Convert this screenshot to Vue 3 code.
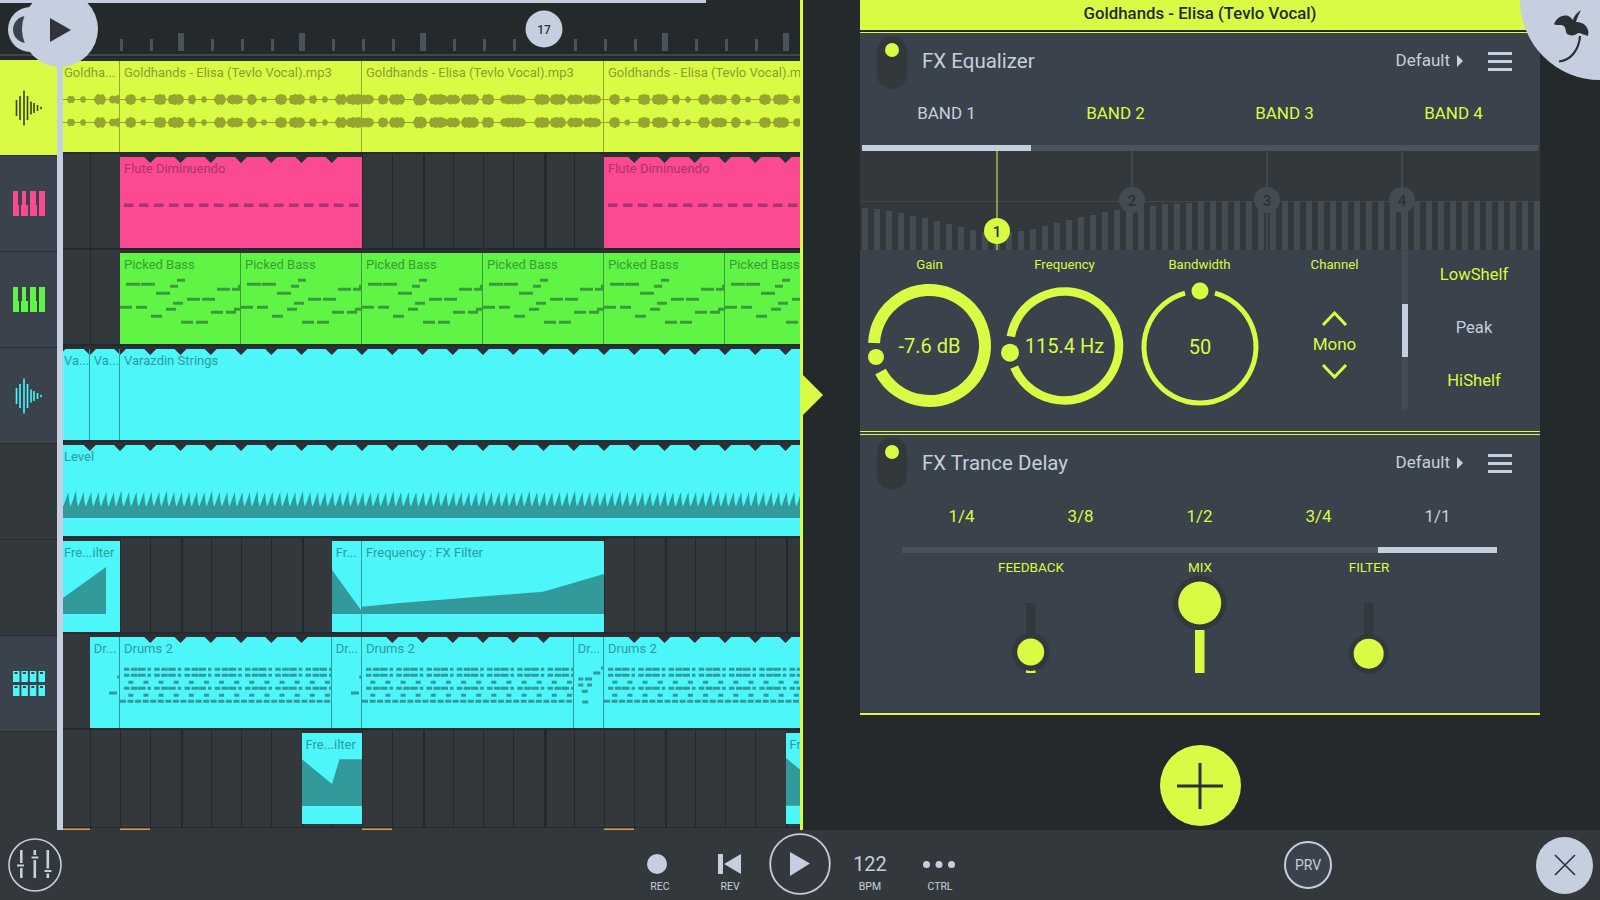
<script setup>
/**
 * Playlist view with channel FX panel
 */

const BEAT = 30.25
const ORIGIN = 59.5
const LANE_LEFT = 63
const LANE_RIGHT = 800
const CLIP_H = 91

const beatX = (k) => ORIGIN + BEAT * k
const rect = (x, y, w, h = 3) => `M${x} ${y - h / 2}h${w}v${h}h${-w}Z`
const poly = (pts) => 'M' + pts.map((p) => p.join(' ')).join('L') + 'Z'

// waveform outline from a list of [center, width, height] blobs
function wave(blobs, width, cy) {
  const amp = (x) => {
    let a = 0.5
    for (const [c, w, h] of blobs) {
      const d = (x - c) / (w / 2)
      if (Math.abs(d) < 1) {
        const v = (h / 2) * 1.12 * Math.sqrt(1 - d * d * d * d) * (0.92 + 0.08 * Math.sin(x * 1.3))
        a = Math.max(a, v)
      }
    }
    return a
  }
  const top = []
  const bottom = []
  for (let x = 0; x <= width; x++) {
    const a = amp(x)
    top.push([x, (cy - a).toFixed(1)])
    bottom.unshift([x, (cy + a).toFixed(1)])
  }
  return poly(top.concat(bottom))
}

const audioA = [[10.7, 10, 10], [23.3, 5, 6], [40, 12, 10], [56, 16, 10], [72, 7, 9], [84, 5, 6], [100, 11, 10], [115, 16, 9], [131.7, 9, 10], [144, 5, 6], [161, 11, 10], [177, 16, 10], [193, 7, 8], [205, 5, 6], [221, 11, 10], [238, 24, 10]]
const audioB = [[5, 13, 9], [21, 10, 9], [35, 16, 10], [58, 13, 11], [76, 18, 10], [91, 14, 9], [108, 18, 10], [126, 12, 10], [151, 26, 9], [180, 15, 10], [196, 16, 10], [213, 16, 9], [230, 18, 9]]
const audioHead = [[8, 7, 7], [20, 6, 6], [37, 11, 10], [50, 8, 7], [55, 6, 8]]
const stereo = (blobs, w) => wave(blobs, w, 38.5) + wave(blobs, w, 61.5)

const fluteArt = (w) => {
  let d = ''
  for (let x = 4; x < w; x += 15) d += rect(x, 48.3, 9.5, 3.6)
  return d
}

const bassNotes = [[6, 14, 31.3], [20.7, 14.3, 31.3], [36, 14, 40.3], [50, 8, 33.3], [57, 8, 27.3], [0, 12, 54.3], [16, 11, 54.3], [31, 11, 63.3], [46, 10, 56.3], [53, 10, 50.3], [67, 13, 46.3], [82, 13, 46.3], [61, 12, 69.3], [76, 12, 69.3], [91, 12, 59.3], [106, 10, 59.3], [114, 7, 56.3], [97, 13, 36.3], [112, 8, 36.3], [118, 3, 33.3]]
const bassArt = () => bassNotes.map(([x, w, y]) => rect(x, y, w)).join('')

const drumsArt = (w) => {
  let d = ''
  for (let b = 0; b * BEAT < w; b++) {
    for (const y of [32.3, 38.3, 51.3]) {
      for (const [x, len] of [[0, 5.5], [7, 6.5], [14, 7.5], [23.5, 3.5]]) {
        d += rect(4 + BEAT * b + x, y, len)
      }
    }
  }
  for (let i = 0; i * 15.125 < w; i++) {
    d += rect(8.3 + i * 15.125, 45.3, 5) + rect(8.3 + i * 15.125, 58.3, 5)
  }
  for (let i = 0; i * 7.56 < w; i++) d += rect(i * 7.56, 64.3, 6)
  return d
}
const drumsShortA = () => rect(19, 56, 8) + rect(27.3, 40, 3)
const drumsShortB = () =>
  rect(4.3, 42, 5) + rect(11, 42, 7) + rect(4.3, 48, 5) + rect(13, 48, 5) +
  rect(7.7, 54.3, 6) + rect(8.3, 65, 6) + rect(19.3, 36, 7) + rect(27, 31, 3)

const levelArt = () => {
  let d = rect(0, 67, 737, 12)
  let i = 0
  for (let x = 0; x < 737; x += 7.56) {
    const top = i % 6 === 1 ? 45.5 : 47
    d += `M${x.toFixed(1)} 62L${(x + 5.5).toFixed(1)} ${top}L${(x + 6.2).toFixed(1)} 56L${(x + 7.56).toFixed(1)} 62Z`
    i++
  }
  return d
}

const mkClip = (from, to, label, art) => ({ from, to, label, art })

const rawTracks = [
  {
    color: '#d9fb44', ink: '#96a530', text: '#8c9c32', side: 'lime', icon: 'wave', iconColor: '#3a4420',
    clips: [
      mkClip(0, 2, 'Goldha...', (w) => stereo(audioHead, w)),
      mkClip(2, 10, 'Goldhands - Elisa (Tevlo Vocal).mp3', (w) => stereo(audioA, w)),
      mkClip(10, 18, 'Goldhands - Elisa (Tevlo Vocal).mp3', (w) => stereo(audioB, w)),
      mkClip(18, 25, 'Goldhands - Elisa (Tevlo Vocal).mp3', (w) => stereo(audioA, w)),
    ],
  },
  {
    color: '#fb4a91', ink: '#ac3274', text: '#ac3274', side: 'panel', icon: 'piano', iconColor: '#fb4a91', notches: true,
    clips: [mkClip(2, 10, 'Flute Diminuendo', fluteArt), mkClip(18, 25, 'Flute Diminuendo', fluteArt)],
  },
  {
    color: '#60f545', ink: '#3c9a3e', text: '#379c3b', side: 'panel', icon: 'piano', iconColor: '#60f545',
    clips: [2, 6, 10, 14, 18, 22].map((k) => mkClip(k, k === 22 ? 25 : k + 4, 'Picked Bass', bassArt)),
  },
  {
    color: '#4df6f9', ink: '#339a9c', text: '#2c9ca2', side: 'panel', icon: 'wave', iconColor: '#4df6f9', notches: true, edgeNotches: true,
    clips: [mkClip(0, 1, 'Va...'), mkClip(1, 2, 'Va...'), mkClip(2, 25, 'Varazdin Strings')],
  },
  {
    color: '#4df6f9', ink: '#339a9c', text: '#2c9ca2', side: 'dark', notches: true,
    clips: [mkClip(0, 25, 'Level', levelArt)],
  },
  {
    color: '#4df6f9', ink: '#339a9c', text: '#2c9ca2', side: 'dark',
    clips: [
      mkClip(0, 2, 'Fre...ilter', () => poly([[0, 57], [43, 26], [43, 73], [0, 73]])),
      mkClip(9, 10, 'Fr...', () => poly([[0, 29], [29.5, 69.7], [30.25, 73], [0, 73]])),
      mkClip(10, 18, 'Frequency : FX Filter', () => poly([[0, 65.7], [38, 62], [181, 50.7], [242, 33], [242, 73], [0, 73]])),
    ],
  },
  {
    color: '#4df6f9', ink: '#339a9c', text: '#2c9ca2', side: 'panel', icon: 'pads', iconColor: '#4df6f9', notches: true,
    clips: [
      mkClip(1, 2, 'Dr...', drumsShortA),
      mkClip(2, 9, 'Drums 2', drumsArt),
      mkClip(9, 10, 'Dr...', drumsShortA),
      mkClip(10, 17, 'Drums 2', drumsArt),
      mkClip(17, 18, 'Dr...', drumsShortB),
      mkClip(18, 25, 'Drums 2', drumsArt),
    ],
  },
  {
    color: '#4df6f9', ink: '#339a9c', text: '#2c9ca2', side: 'dark',
    clips: [
      mkClip(8, 10, 'Fre...ilter', () => poly([[0, 26.3], [30, 51], [37.5, 26.3], [60.5, 26.3], [60.5, 73], [0, 73]])),
      mkClip(24, 25, 'Fre...ilter', () => poly([[0, 25], [14.5, 37], [14.5, 72.7], [0, 72.7]])),
    ],
  },
]

const tracks = rawTracks.map((track) => ({
  ...track,
  clips: track.clips.map((c, i) => {
    const x0 = Math.max(beatX(c.from), LANE_LEFT)
    const x1 = Math.min(beatX(c.to), LANE_RIGHT)
    const w = x1 - x0
    const joined = i > 0 && track.clips[i - 1].to === c.from
    let notch = ''
    if (track.notches) {
      const a = track.edgeNotches ? c.from : c.from + 1
      const b = track.edgeNotches ? c.to : c.to - 1
      for (let k = a; k <= b; k++) {
        const x = beatX(k) - x0
        notch += `M${x - 6} 0H${x + 6}L${x} 6Z`
      }
    }
    return {
      ...c,
      w,
      d: c.art ? c.art(w) : '',
      notch,
      joined,
      first: c.from === 0,
      style: {
        left: `${x0 - LANE_LEFT - (joined ? 1 : 0)}px`,
        width: `${w + (joined ? 1 : 0)}px`,
        height: `${CLIP_H}px`,
      },
    }
  }),
}))

const iconBars = [[1.5, 8], [5, 12], [9, 17.5], [12.5, 12], [16, 6.5], [19, 5], [22.5, 3], [26, 1.2]]

// ruler and grid
const rulerBeats = Array.from({ length: 23 }, (_, i) => i + 2)
  .filter((k) => k !== 16)
  .map((k) => ({ k, x: Math.round(beatX(k)), big: k % 4 === 0 }))
const gridLines = Array.from({ length: 25 }, (_, i) => i + 1).map((k) => ({
  k,
  x: Math.round(beatX(k)) - LANE_LEFT,
  w: k === 16 ? 3 : k % 4 === 0 ? 2 : 1,
}))
const loopMarks = [[0, 27], [57, 30], [299, 30], [541, 30]]

// equalizer display
const eqTops = [208, 209, 211, 213, 216, 218, 221, 224, 227, 230, 232, 233, 232, 231, 229, 226, 223, 220, 217, 215, 212, 210, 208, 206, 206, 204, 203.5, 203]
const eqBars = Array.from({ length: 57 }, (_, i) => ({
  x: 2 + i * 12,
  y: (eqTops[i] ?? 201) - 151,
}))
const eqHandles = [
  { n: 2, x: 272, y: 49 },
  { n: 3, x: 407, y: 49 },
  { n: 4, x: 542, y: 49 },
]

function arc(cx, cy, r, a0, a1) {
  const pt = (a) => {
    const t = (a * Math.PI) / 180
    return `${(cx + r * Math.sin(t)).toFixed(2)} ${(cy - r * Math.cos(t)).toFixed(2)}`
  }
  const large = a1 - a0 > 180 ? 1 : 0
  return `M${pt(a0)}A${r} ${r} 0 ${large} 1 ${pt(a1)}`
}

const knobs = [
  { label: 'Gain', value: '-7.6 dB', cx: 67.5, cy: 65.5, d: arc(67.5, 65.5, 55.5, 272.6, 602), sw: 12, hx: 14, hy: 77, hr: 8 },
  { label: 'Frequency', value: '115.4 Hz', cx: 67.5, cy: 66, d: arc(67.5, 66, 54.5, 280, 607.3), sw: 8.5, hx: 13, hy: 72.7, hr: 9 },
  { label: 'Bandwidth', value: '50', cx: 68, cy: 67, d: arc(68, 67, 56, 15.5, 344.5), sw: 5, hx: 68, hy: 11, hr: 8.5 },
]

const bands = ['BAND 1', 'BAND 2', 'BAND 3', 'BAND 4']
const shelves = ['LowShelf', 'Peak', 'HiShelf']
const rates = ['1/4', '3/8', '1/2', '3/4', '1/1']

const sliders = [
  { label: 'FEEDBACK', cy: 77, r: 13.5, halo: 19, fill: 95 },
  { label: 'MIX', cy: 28, r: 21.5, halo: 27, fill: 55 },
  { label: 'FILTER', cy: 78.7, r: 15, halo: 20, fill: 0 },
]
</script>

<template>
  <div class="app">
    <div class="main">
      <section class="arrange">
        <div class="ruler">
          <div class="song-pos"></div>
          <svg class="ruler-svg" width="800" height="53">
            <rect
              v-for="t in rulerBeats"
              :key="t.k"
              :x="t.big ? t.x - 3 : t.x"
              :y="t.big ? 30 : 36"
              :width="t.big ? 6 : 3"
              :height="t.big ? 18 : 12"
              fill="#4a535a"
            />
            <rect x="0" y="51" width="800" height="3" fill="#3f464c" />
            <circle cx="544" cy="26" r="18.5" fill="#c5cfdf" />
            <text x="544" y="30.500" class="marker-text" text-anchor="middle">17</text>
          </svg>
        </div>

        <div class="arrange-body">
          <div class="sidebar">
            <div v-for="(track, i) in tracks" :key="i" class="side-row" :class="track.side">
              <svg v-if="track.icon === 'wave'" width="28" height="36" viewBox="0 0 28 36">
                <rect
                  v-for="b in iconBars"
                  :key="b[0]"
                  :x="b[0] - 0.8"
                  :y="18 - b[1]"
                  width="1.6"
                  :height="b[1] * 2"
                  :fill="track.iconColor"
                />
              </svg>
              <svg v-else-if="track.icon === 'piano'" width="32" height="25" viewBox="0 0 32 25">
                <path
                  d="M0 0H5V14H6V25H0ZM9 0H13V14H15V25H8V14H9ZM17 0H23V14H24V25H17ZM26 0H32V25H26Z"
                  :fill="track.iconColor"
                />
              </svg>
              <svg v-else-if="track.icon === 'pads'" width="32" height="25" viewBox="0 0 32 25">
                <g v-for="x in [0, 8.4, 16.8, 25.5]" :key="x">
                  <rect :x="x" y="0" width="6.5" height="11" :fill="track.iconColor" />
                  <rect :x="x" y="14" width="6.5" height="11" :fill="track.iconColor" />
                  <rect :x="x + 1.5" y="1" width="3" height="2" fill="#3a424b" />
                  <rect :x="x + 1.5" y="15" width="3" height="2" fill="#3a424b" />
                </g>
              </svg>
            </div>
          </div>
          <div class="rail"></div>

          <div class="lanes">
            <svg class="grid-svg" width="737" height="774">
              <rect v-for="g in gridLines" :key="g.k" :x="g.x" y="0" :width="g.w" height="771" fill="#25292c" />
              <rect x="0" y="771" width="737" height="1" fill="#25292c" />
              <rect v-for="m in loopMarks" :key="m[0]" :x="m[0]" y="772.5" :width="m[1]" height="1.5" fill="#e09a50" />
            </svg>
            <div v-for="(track, i) in tracks" :key="i" class="lane">
              <div
                v-for="(clip, j) in track.clips"
                :key="j"
                class="clip"
                :class="{ joined: clip.joined, first: clip.first }"
                :style="[clip.style, { background: track.color, borderLeftColor: track.ink, color: track.text }]"
              >
                <svg v-if="clip.d || clip.notch" class="clip-art" :width="clip.w" height="91">
                  <path v-if="clip.d" :d="clip.d" :fill="track.ink" />
                  <path v-if="clip.notch" :d="clip.notch" fill="#2b3034" />
                </svg>
                <span class="clip-label">{{ clip.label }}</span>
              </div>
            </div>
          </div>
        </div>

        <div class="transport-moon">
          <span class="moon-mark"></span>
        </div>
        <button class="float-play">
          <svg width="21" height="24" viewBox="0 0 21 24"><path d="M0 0L21 12L0 24Z" fill="#2e3438" /></svg>
        </button>
      </section>

      <section class="side">
        <svg class="side-arrow" width="20" height="40" viewBox="0 0 20 40"><path d="M0 0L20 20L0 40Z" fill="#d9fb44" /></svg>

        <div class="rack">
          <div class="rack-title">Goldhands - Elisa (Tevlo Vocal)</div>

          <div class="fx fx-eq">
            <header class="fx-head">
              <span class="fx-toggle"><i></i></span>
              <h2>FX Equalizer</h2>
              <span class="preset">Default</span>
              <svg class="preset-arrow" width="6" height="12" viewBox="0 0 6 12"><path d="M0 0L6 6L0 12Z" fill="#c5cfdf" /></svg>
              <span class="menu"><i></i><i></i><i></i></span>
            </header>

            <div class="tabs bands">
              <div v-for="(b, i) in bands" :key="b" class="tab" :class="{ active: i === 0 }">{{ b }}</div>
            </div>

            <svg class="eq" width="680" height="99">
              <rect x="0" y="50" width="680" height="1" fill="#3f464c" />
              <rect v-for="b in eqBars" :key="b.x" :x="b.x" :y="b.y" width="6" :height="99 - b.y" fill="#454d54" />
              <g v-for="h in eqHandles" :key="h.n">
                <rect :x="h.x - 0.5" y="0" width="1" height="99" fill="#4d565d" />
                <circle :cx="h.x" :cy="h.y" r="13" fill="#434c53" />
                <text :x="h.x" :y="h.y + 5.5" class="eq-num off" text-anchor="middle">{{ h.n }}</text>
              </g>
              <rect x="136.5" y="0" width="1" height="99" fill="#d9fb44" />
              <circle cx="137" cy="80" r="13" fill="#d9fb44" />
              <text x="137" y="85.5" class="eq-num" text-anchor="middle">1</text>
            </svg>

            <div class="controls">
              <div v-for="k in knobs" :key="k.label" class="ctl">
                <div class="ctl-label">{{ k.label }}</div>
                <svg width="135" height="135" class="knob">
                  <path :d="k.d" fill="none" stroke="#d9fb44" :stroke-width="k.sw" />
                  <circle :cx="k.hx" :cy="k.hy" :r="k.hr" fill="#d9fb44" />
                  <text :x="k.cx" :y="k.cy + 7" class="knob-value" text-anchor="middle">{{ k.value }}</text>
                </svg>
              </div>
              <div class="ctl">
                <div class="ctl-label">Channel</div>
                <div class="channel">
                  <svg width="27" height="15" viewBox="0 0 27 15"><path d="M2 14L13.5 2L25 14" fill="none" stroke="#d9fb44" stroke-width="3" /></svg>
                  <span>Mono</span>
                  <svg class="chev-down" width="27" height="15" viewBox="0 0 27 15"><path d="M2 1L13.5 13L25 1" fill="none" stroke="#d9fb44" stroke-width="3" /></svg>
                </div>
              </div>
              <div class="scroll"><i></i></div>
              <div class="shelves">
                <div v-for="s in shelves" :key="s" class="shelf" :class="{ active: s === 'Peak' }">{{ s }}</div>
              </div>
            </div>
          </div>

          <div class="fx fx-delay">
            <header class="fx-head">
              <span class="fx-toggle"><i></i></span>
              <h2>FX Trance Delay</h2>
              <span class="preset">Default</span>
              <svg class="preset-arrow" width="6" height="12" viewBox="0 0 6 12"><path d="M0 0L6 6L0 12Z" fill="#c5cfdf" /></svg>
              <span class="menu"><i></i><i></i><i></i></span>
            </header>

            <div class="tabs rates">
              <div v-for="(r, i) in rates" :key="r" class="tab" :class="{ active: i === 4 }">{{ r }}</div>
            </div>

            <div class="sliders">
              <div v-for="s in sliders" :key="s.label" class="slider">
                <div class="slider-label">{{ s.label }}</div>
                <svg width="60" height="110">
                  <rect x="25" y="28" width="9.5" height="70" :fill="s.fill ? '#3a424b' : '#33383c'" />
                  <rect v-if="s.label !== 'MIX'" x="25" y="28" width="9.5" height="50" fill="#33383c" />
                  <rect v-if="s.fill" x="25" :y="s.fill" width="9.5" :height="98 - s.fill" fill="#d9fb44" />
                  <circle cx="29.7" :cy="s.cy" :r="s.halo" fill="#33383c" />
                  <circle cx="29.7" :cy="s.cy" :r="s.r" fill="#d9fb44" />
                </svg>
              </div>
            </div>
          </div>

          <button class="add">
            <svg width="46" height="46" viewBox="0 0 46 46"><path d="M0 21.5H46V24.5H0ZM21.5 0H24.5V46H21.5Z" fill="#2b3034" /></svg>
          </button>
        </div>

        <div class="logo">
          <svg width="120" height="100" viewBox="0 0 120 100">
            <path
              d="M74 24C76 19 80 16 85 15.500C89 15 91 18 93 20C94 17 96 13 101 10C99 14 97 18 96 22C101 22 106 24 108 30C109 32 108 34 108 36C104 35 101 33 98 33C95 36 90 36 87 34C85 30 86 27 83 25.500C80 24 76 26 74 24Z"
              fill="#2b3034"
            />
            <path d="M100 36C99 50 91 60 79 61.500" fill="none" stroke="#2b3034" stroke-width="2.200" />
          </svg>
        </div>
      </section>
    </div>

    <footer class="bar">
      <svg class="mixer" width="54" height="54" viewBox="0 0 54 54">
        <circle cx="27" cy="27" r="26" fill="none" stroke="#c5cfdf" stroke-width="1.600" />
        <g fill="#c5cfdf">
          <rect x="12" y="12" width="2.600" height="28" />
          <rect x="25.500" y="12" width="2.600" height="28" />
          <rect x="38.500" y="12" width="2.600" height="28" />
        </g>
        <g>
          <rect x="8" y="25" width="11" height="5" fill="#33383c" />
          <rect x="9" y="26.500" width="7" height="2" fill="#c5cfdf" />
          <rect x="21" y="17" width="11" height="5" fill="#33383c" />
          <rect x="23.500" y="18.500" width="7" height="2" fill="#c5cfdf" />
          <rect x="34" y="30.500" width="11" height="5" fill="#33383c" />
          <rect x="36.500" y="32" width="7" height="2" fill="#c5cfdf" />
        </g>
      </svg>

      <div class="transport">
        <div class="t-col">
          <svg class="t-icon" width="70" height="24"><circle cx="32" cy="12" r="10" fill="#c5cfdf" /></svg>
          <span>REC</span>
        </div>
        <div class="t-col">
          <svg class="t-icon" width="70" height="24"><path d="M23 2H28V22H23ZM46 2V22L29 12Z" fill="#c5cfdf" /></svg>
          <span>REV</span>
        </div>
        <div class="t-play">
          <svg width="62" height="62" viewBox="0 0 62 62">
            <circle cx="31" cy="31" r="29.800" fill="none" stroke="#c5cfdf" stroke-width="1.800" />
            <path d="M21 19L41 30.500L21 43Z" fill="#c5cfdf" />
          </svg>
        </div>
        <div class="t-col">
          <div class="t-bpm">122</div>
          <span>BPM</span>
        </div>
        <div class="t-col">
          <svg class="t-icon" width="70" height="24">
            <circle cx="21.500" cy="12.500" r="3.500" fill="#c5cfdf" />
            <circle cx="34" cy="12.500" r="3.500" fill="#c5cfdf" />
            <circle cx="46.500" cy="12.500" r="3.500" fill="#c5cfdf" />
          </svg>
          <span>CTRL</span>
        </div>
      </div>

      <div class="prv">PRV</div>
      <button class="close">
        <svg width="22" height="22" viewBox="0 0 22 22"><path d="M1 1L21 21M21 1L1 21" stroke="#2b3034" stroke-width="1.600" /></svg>
      </button>
    </footer>
  </div>
</template>

<style scoped>
.app {
  width: 1600px;
  height: 900px;
  overflow: hidden;
  display: flex;
  flex-direction: column;
  background: #24292c;
  color: #c5cfdf;
  font-family: Roboto, "Liberation Sans", sans-serif;
}

.main {
  display: flex;
  height: 830px;
}

button {
  border: 0;
  padding: 0;
  display: flex;
  align-items: center;
  justify-content: center;
}

/* arrangement */
.arrange {
  position: relative;
  width: 803px;
  border-right: 3px solid #d9fb44;
  box-sizing: border-box;
  background: #24292c;
}

.ruler {
  height: 56px;
}

.song-pos {
  width: 706px;
  height: 3px;
  background: #c5cfdf;
}

.ruler-svg {
  display: block;
}

.marker-text {
  font-size: 12px;
  font-weight: 500;
  fill: #2e3438;
}

.arrange-body {
  display: flex;
  height: 774px;
}

.sidebar {
  width: 57px;
  padding-top: 4px;
  display: flex;
  flex-direction: column;
  flex: none;
}

.side-row {
  height: 96px;
  flex: none;
  box-sizing: border-box;
  border-bottom: 1px solid #2a2e32;
  display: flex;
  align-items: center;
  justify-content: center;
}

.side-row:last-child {
  flex: 1;
  border-bottom: 0;
}

.side-row.lime {
  background: #d9fb44;
}

.side-row.panel {
  background: #3a424b;
}

.side-row.dark {
  background: #33383c;
}

.rail {
  width: 6px;
  margin-top: 4px;
  flex: none;
  background: #c5cfdf;
}

.lanes {
  position: relative;
  width: 737px;
  background: #33383c;
  overflow: hidden;
}

.grid-svg {
  position: absolute;
  left: 0;
  top: 0;
}

.lane {
  position: relative;
  height: 96px;
  box-sizing: border-box;
  border-top: 2px solid #25292c;
}

.clip {
  position: absolute;
  top: 3px;
  box-sizing: border-box;
  overflow: hidden;
  box-shadow: 0 -3px 0 #2b3034;
}

.clip.joined {
  border-left: 1px solid;
}

.clip-art {
  position: absolute;
  left: 0;
  top: 0;
}

.clip-label {
  position: absolute;
  left: 4px;
  top: 3px;
  font-size: 13px;
  line-height: 18px;
  white-space: nowrap;
}

.clip.first .clip-label {
  left: 1px;
}

/* floating play over the ruler */
.transport-moon {
  position: absolute;
  left: 8px;
  top: 7px;
  width: 45px;
  height: 45px;
  border-radius: 50%;
  background: #c5cfdf;
}

.moon-mark {
  position: absolute;
  left: 5px;
  top: 9px;
  width: 27px;
  height: 27px;
  border-radius: 50%;
  background: radial-gradient(circle at 21px 13.5px, #c5cfdf 0 11.5px, #3a424b 12px);
}

.float-play {
  position: absolute;
  left: 22px;
  top: -9px;
  width: 76px;
  height: 76px;
  border-radius: 50%;
  background: #c5cfdf;
}

.float-play svg {
  margin-top: 1px;
}

/* right side */
.side {
  position: relative;
  flex: 1;
  background: #24292c;
}

.side-arrow {
  position: absolute;
  left: 0;
  top: 375px;
}

.rack {
  width: 680px;
  margin-left: 57px;
}

.rack-title {
  height: 30px;
  line-height: 27px;
  text-align: center;
  background: #d9fb44;
  color: #24292c;
  font-size: 16.8px;
  font-weight: 500;
  border-bottom: 2px solid #24292c;
  box-shadow: 0 1px 0 #d9fb44;
}

.fx {
  background: #3a424b;
}

.fx-eq {
  margin-top: 1px;
  height: 399px;
  box-sizing: border-box;
  border-bottom: 1px solid #d9fb44;
}

.fx-delay {
  height: 281px;
  box-sizing: border-box;
  margin-top: 2px;
  border-top: 1px solid #d9fb44;
  border-bottom: 2px solid #d9fb44;
  box-shadow: 0 -2px 0 #3a424b;
}

.fx-head {
  display: flex;
  align-items: center;
  height: 56px;
  padding-left: 17px;
  padding-right: 28px;
}

.fx-delay .fx-head {
  height: 55px;
}

.fx-toggle {
  width: 30px;
  height: 53px;
  align-self: flex-end;
  border-radius: 15px;
  background: #33383c;
  display: flex;
  justify-content: center;
  padding-top: 7px;
  box-sizing: border-box;
}

.fx-delay .fx-toggle {
  height: 52px;
}

.fx-toggle i {
  width: 14px;
  height: 14px;
  border-radius: 50%;
  background: #d9fb44;
}

.fx-head h2 {
  flex: 1;
  margin: 0 0 0 15px;
  font-size: 20.5px;
  font-weight: 400;
}

.preset {
  font-size: 17px;
  margin-bottom: 2px;
}

.preset-arrow {
  margin-left: 7px;
  margin-right: 25px;
}

.menu {
  display: flex;
  flex-direction: column;
  gap: 5px;
  width: 24px;
}

.fx-delay .menu {
  margin-top: 2px;
}

.menu i {
  height: 3px;
  background: #c5cfdf;
}

.tabs {
  display: grid;
}

.bands {
  grid-template-columns: repeat(4, 169px);
  margin: 0 2px;
}

.rates {
  grid-template-columns: repeat(5, 119px);
  margin: 0 43px 0 42px;
}

.tab {
  text-align: center;
  font-size: 17px;
  line-height: 22px;
  padding-top: 13px;
  height: 62px;
  box-sizing: border-box;
  color: #d9fb44;
  border-bottom: 6px solid #4a525b;
}

.rates .tab {
  padding-top: 15px;
  height: 63px;
}

.tab.active {
  color: #c5cfdf;
  border-bottom-color: #c5cfdf;
}

.eq {
  display: block;
  background: #33383c;
}

.eq-num {
  font-size: 15px;
  font-weight: 500;
  fill: #2b3034;
}

.eq-num.off {
  fill: #2b3136;
}

.controls {
  display: grid;
  grid-template-columns: repeat(4, 135px) 6px 1fr;
  margin-left: 2px;
}

.ctl-label {
  text-align: center;
  font-size: 13.2px;
  line-height: 16px;
  padding-top: 7px;
  color: #d9fb44;
}

.knob {
  display: block;
  margin-top: 7px;
}

.knob-value {
  font-size: 20px;
  fill: #d9fb44;
}

.channel {
  display: flex;
  flex-direction: column;
  align-items: center;
  margin-top: 38px;
  gap: 8px;
  color: #d9fb44;
  font-size: 17px;
  line-height: 20px;
}

.channel svg {
  display: block;
}

.channel .chev-down {
  margin-top: 2px;
}

.scroll {
  height: 160px;
  background: #434b54;
  border-radius: 3px;
  padding-top: 54px;
  box-sizing: border-box;
}

.scroll i {
  display: block;
  height: 53px;
  background: #c5cfdf;
}

.shelves {
  display: flex;
  flex-direction: column;
  padding-top: 14px;
  gap: 31px;
}

.shelf {
  text-align: center;
  font-size: 16.6px;
  line-height: 22px;
  color: #d9fb44;
}

.shelf.active {
  color: #c5cfdf;
}

.sliders {
  display: grid;
  grid-template-columns: repeat(3, 169px);
  justify-content: center;
}

.slider {
  display: flex;
  flex-direction: column;
  align-items: center;
}

.slider-label {
  font-size: 13.5px;
  line-height: 16px;
  padding-top: 6px;
  color: #d9fb44;
}

.slider svg {
  display: block;
}

.add {
  width: 81px;
  height: 81px;
  margin: 30px auto 0;
  border-radius: 50%;
  background: #d9fb44;
}

.logo {
  position: absolute;
  right: 0;
  top: 0;
  width: 80px;
  height: 80px;
  border-bottom-left-radius: 80px;
  background: #c5cfdf;
}

.logo svg {
  position: absolute;
  right: 0;
  top: 0;
}

/* bottom bar */
.bar {
  height: 70px;
  display: flex;
  align-items: center;
  background: #33383c;
}

.mixer {
  margin-left: 8px;
  flex: none;
}

.transport {
  display: flex;
  margin-left: 563px;
  flex: none;
}

.t-col {
  width: 70px;
  height: 70px;
  padding-top: 22px;
  box-sizing: border-box;
  text-align: center;
  font-size: 10.5px;
  line-height: 12px;
}

.t-col span {
  display: block;
  margin-top: 5px;
}

.t-icon {
  display: block;
}

.t-bpm {
  height: 24px;
  font-size: 20px;
  line-height: 24px;
}

.t-play {
  width: 70px;
  height: 70px;
  display: flex;
  align-items: center;
  justify-content: center;
}

.t-play svg {
  margin-top: -2px;
}

.prv {
  width: 48px;
  height: 48px;
  margin-left: 309px;
  flex: none;
  box-sizing: border-box;
  border: 2px solid #c5cfdf;
  border-radius: 50%;
  background: #3a424b;
  text-align: center;
  line-height: 44px;
  font-size: 14px;
}

.close {
  width: 57px;
  height: 57px;
  margin-left: 204px;
  border-radius: 50%;
  flex: none;
  background: #c5cfdf;
}
</style>

<style>
body {
  overflow: hidden;
}
</style>
